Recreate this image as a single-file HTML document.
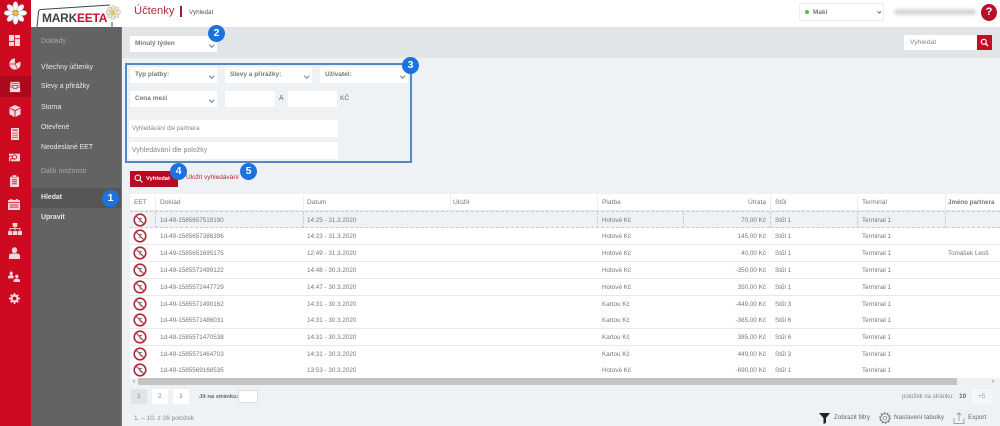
<!DOCTYPE html>
<html lang="cs"><head><meta charset="utf-8"><title>Účtenky</title>
<style>
*{box-sizing:border-box}
html,body{margin:0;padding:0;background:#eff2f5}
body{width:1000px;height:426px;overflow:hidden;position:relative}
#w{position:absolute;left:0;top:0;width:1000px;height:426px;overflow:hidden;background:#eff2f5;font-family:"Liberation Sans",sans-serif;color:#555;filter:blur(.3px)}
.a{position:absolute}
.t{position:absolute;white-space:nowrap;line-height:12px}
.box{position:absolute;background:#fff}
.sel{position:absolute;background:#fff;font-size:6.5px;font-weight:bold;color:#777;line-height:16px;padding-left:5px}
.sel:after{content:"";position:absolute;right:3.500px;top:7px;width:2.500px;height:2.500px;border-right:1px solid #777;border-bottom:1px solid #777;transform:rotate(45deg)}
.m{color:#e8e8e8;font-size:6.900px;left:41px}
.b{position:absolute;width:17px;height:17px;border-radius:50%;background:#1a73e0;color:#fff;font-size:10.5px;font-weight:bold;text-align:center;line-height:17px}
.row{position:absolute;left:130px;width:870px;height:17px;background:#fff;border-bottom:1px solid #e6e8ea;font-size:6.3px;color:#777}
.row span{position:absolute;top:3px;line-height:11px;white-space:nowrap}
.row .d{left:30px}.row .e{left:177px}.row .p{left:472px}.row .u{right:234px}.row .s{left:645px}.row .tm{left:732px}.row .j{left:818px}
.row svg{position:absolute;left:3px;top:1px}
.h{position:absolute;top:3px;font-size:6.600px;color:#777;line-height:11px;white-space:nowrap}
.v{position:absolute;top:0;height:17px;width:1px;background:#eee}
.dv{position:absolute;top:0;height:16px;width:0;border-left:1px dashed #c9cdd1}
.ic{position:absolute}
</style></head><body><div id="w">
<svg width="0" height="0" style="position:absolute"><defs><symbol id="ee" viewBox="0 0 14 14"><circle cx="7" cy="7" r="5.8" fill="#fff" stroke="#b02a38" stroke-width="1.600"/><path d="M3 3L11 11" stroke="#b02a38" stroke-width="1.100"/><path d="M5 5.500H9M7 5.500V9.500" stroke="#777" stroke-width=".9" fill="none"/></symbol></defs></svg>

<div class="a" style="left:0;top:0;width:1000px;height:27px;background:#fff"></div>
<div class="a" style="left:0;top:0;width:31px;height:426px;background:#cc0a20"></div>
<div class="a" style="left:0;top:76px;width:31px;height:21px;background:#ab0a1d"></div>
<div class="a" style="left:31px;top:27px;width:90px;height:399px;background:#636363"></div>
<div class="a" style="left:31px;top:188px;width:90px;height:20px;background:#565656"></div>
<div class="a" style="left:121px;top:27px;width:1px;height:399px;background:#777"></div>
<div class="a" style="left:122px;top:27px;width:878px;height:31px;background:#e2e5e8"></div>

<svg class="a" style="left:4px;top:1px" width="23" height="24" viewBox="0 0 23 24"><g fill="#fff" stroke="#999" stroke-width=".4"><ellipse cx="11.500" cy="5" rx="2.600" ry="4.500"/><ellipse cx="11.500" cy="19" rx="2.600" ry="4.500"/><ellipse cx="4.500" cy="12" rx="4.500" ry="2.600"/><ellipse cx="18.500" cy="12" rx="4.500" ry="2.600"/><ellipse cx="6.500" cy="7" rx="2.600" ry="4.300" transform="rotate(-45 6.500 7)"/><ellipse cx="16.500" cy="7" rx="2.600" ry="4.300" transform="rotate(45 16.500 7)"/><ellipse cx="6.500" cy="17" rx="2.600" ry="4.300" transform="rotate(45 6.500 17)"/><ellipse cx="16.500" cy="17" rx="2.600" ry="4.300" transform="rotate(-45 16.500 17)"/></g><circle cx="11.500" cy="12" r="2.600" fill="#e5c23c"/></svg>

<svg class="a" style="left:35px;top:3px" width="87" height="25" viewBox="0 0 87 25"><path d="M2 24L3.500 9Q4 6.500 6 6.500L75 2" fill="none" stroke="#444" stroke-width="1"/><path d="M77 19V24" stroke="#444" stroke-width="1"/><g fill="#eee9d2" stroke="#999" stroke-width=".35"><circle cx="78" cy="4.500" r="2"/><circle cx="82" cy="6" r="2"/><circle cx="83.500" cy="9.500" r="2"/><circle cx="82" cy="13" r="2"/><circle cx="78" cy="14.500" r="2"/><circle cx="74.500" cy="13" r="2"/><circle cx="73" cy="9.500" r="2"/><circle cx="74.500" cy="6" r="2"/></g><circle cx="78" cy="9.500" r="2.600" fill="#dcc95a"/></svg>
<div class="t" style="left:42px;top:11px;font-size:12px;line-height:14px;font-weight:bold;color:#444;letter-spacing:-.25px">MARK<span style="color:#c8102e">EETA</span></div>

<div class="t" style="left:134px;top:3px;font-size:11.200px;line-height:16px;color:#b5293a">Účtenky</div>
<div class="a" style="left:180px;top:6px;width:2px;height:11px;background:#a51c30"></div>
<div class="t" style="left:189px;top:7px;font-size:6.300px;color:#555">Vyhledat</div>

<div class="a" style="left:799px;top:3px;width:85px;height:18px;background:#fff;border:1px solid #eee"></div>
<div class="a" style="left:805px;top:10px;width:4px;height:4px;border-radius:50%;background:#5cb85c"></div>
<div class="t" style="left:813px;top:7px;font-size:6.500px;font-weight:bold;color:#777">Maki</div>
<div class="a" style="left:878px;top:10px;width:2.500px;height:2.500px;border-right:1px solid #777;border-bottom:1px solid #777;transform:rotate(45deg)"></div>
<div class="a" style="left:894px;top:9px;width:82px;height:6px;background:#d4d6d9;border-radius:4px;filter:blur(1.500px)"></div>
<div class="a" style="left:981px;top:4px;width:16px;height:17px;border-radius:50%;background:#b8102a;color:#fff;font-size:11px;font-weight:bold;text-align:center;line-height:17px">?</div>

<div class="box" style="left:904px;top:35px;width:73px;height:15px"></div>
<div class="t" style="left:910px;top:37px;font-size:6.800px;color:#888">Vyhledat</div>
<div class="a" style="left:977px;top:35px;width:15px;height:15px;background:#c40d25"></div>
<svg class="a" style="left:980px;top:38px" width="9" height="9" viewBox="0 0 9 9"><circle cx="3.800" cy="3.800" r="2.500" fill="none" stroke="#fff" stroke-width="1.200"/><path d="M5.500 5.500L8 8" stroke="#fff" stroke-width="1.400"/></svg>

<!-- sidebar icons -->
<svg class="ic" style="left:9px;top:35px" width="11" height="11" viewBox="0 0 13 12" preserveAspectRatio="none" fill="#f3d9dc"><rect width="6" height="6.500"/><rect x="7" width="6" height="3.500"/><rect y="7.500" width="6" height="4.500"/><rect x="7" y="4.500" width="6" height="7.500"/></svg>
<svg class="ic" style="left:9px;top:58px" width="12" height="12" viewBox="0 0 14 14"><circle cx="7" cy="7" r="6.500" fill="#f3d9dc"/><path d="M7 7V0A7 7 0 0 1 13.500 4Z" fill="#cc0a20"/><path d="M7 7L10 13M7 7H1" stroke="#cc0a20" stroke-width=".8"/></svg>
<svg class="ic" style="left:9px;top:81px" width="12" height="12" viewBox="0 0 14 14"><path d="M2 1H12L13 7V13H1V7Z" fill="#f3d9dc"/><path d="M3 3H11M2.500 5H11.500" stroke="#ab0a1d" stroke-width=".8"/><path d="M1 7H4.500L5.500 9H8.500L9.500 7H13" fill="none" stroke="#ab0a1d" stroke-width=".8"/></svg>
<svg class="ic" style="left:9px;top:105px" width="12" height="12" viewBox="0 0 13 14" fill="#f3d9dc"><path d="M6.500 0L13 3L6.500 6L0 3Z"/><path d="M0 4L6 7V14L0 11Z"/><path d="M13 4L7 7V14L13 11Z"/></svg>
<svg class="ic" style="left:11px;top:128px" width="8" height="12" viewBox="0 0 11 14" preserveAspectRatio="none"><rect width="11" height="14" rx="1" fill="#f3d9dc"/><path d="M2 2.500H9M2 6H3.500M4.800 6H6.300M7.500 6H9M2 8.500H3.500M4.800 8.500H6.300M7.500 8.500H9M2 11H3.500M4.800 11H6.300M7.500 11H9" stroke="#cc0a20" stroke-width="1.200"/></svg>
<svg class="ic" style="left:8px;top:152px" width="13" height="11" viewBox="0 0 15 13"><rect x="1" y="2" width="13" height="9" fill="#f3d9dc"/><circle cx="7.500" cy="6" r="2.500" fill="none" stroke="#cc0a20"/><path d="M1 5H5M3 11V8H8" fill="none" stroke="#cc0a20"/></svg>
<svg class="ic" style="left:10px;top:175px" width="9" height="12" viewBox="0 0 11 15" preserveAspectRatio="none"><rect y="2" width="11" height="13" rx="1" fill="#f3d9dc"/><rect x="3" width="5" height="3" fill="#f3d9dc" stroke="#cc0a20" stroke-width=".5"/><path d="M2.500 6H8.500M2.500 8.500H8.500M2.500 11H8.500" stroke="#cc0a20"/></svg>
<svg class="ic" style="left:8px;top:199px" width="12" height="11" viewBox="0 0 15 13" preserveAspectRatio="none"><rect y="1" width="15" height="12" rx="1" fill="#f3d9dc"/><path d="M0 4H15M2 7H13M2 9.500H13" stroke="#cc0a20"/><path d="M4 0V2M11 0V2" stroke="#f3d9dc" stroke-width="2"/></svg>
<svg class="ic" style="left:8px;top:223px" width="14" height="12" viewBox="0 0 15 14" preserveAspectRatio="none" fill="#f3d9dc"><rect x="5" width="5" height="4.500"/><rect x="0" y="9.500" width="4.500" height="4.500"/><rect x="5.300" y="9.500" width="4.500" height="4.500"/><rect x="10.500" y="9.500" width="4.500" height="4.500"/><path d="M2.200 9V6.500H12.800V9M7.500 4.500V9" fill="none" stroke="#f3d9dc"/></svg>
<svg class="ic" style="left:9px;top:247px" width="11" height="12" viewBox="0 0 13 13" preserveAspectRatio="none" fill="#f3d9dc"><circle cx="6.500" cy="3.500" r="3.200"/><path d="M0 13V9.500Q0 7.500 3 7H10Q13 7.500 13 9.500V13Z"/></svg>
<svg class="ic" style="left:8px;top:271px" width="12" height="11" viewBox="0 0 15 12" preserveAspectRatio="none" fill="#f3d9dc"><circle cx="4" cy="2.500" r="2"/><path d="M0 8V6Q1 4.500 4 4.500Q7 4.500 7 6V8Z"/><circle cx="11" cy="6" r="2"/><path d="M7 12V10Q8 8.500 11 8.500Q14.500 8.500 15 10V12Z"/></svg>
<svg class="ic" style="left:9px;top:293px" width="11" height="11" viewBox="0 0 13 13"><circle cx="6.500" cy="6.500" r="3.500" fill="none" stroke="#f3d9dc" stroke-width="2.600"/><path d="M6.500 0V2.500M6.500 10.500V13M0 6.500H2.500M10.500 6.500H13M2 2L3.500 3.500M9.500 9.500L11 11M11 2L9.500 3.500M3.500 9.500L2 11" stroke="#f3d9dc" stroke-width="2"/></svg>

<!-- menu -->
<div class="t m" style="top:36px;color:#a8a8a8">Doklady</div>
<div class="t m" style="top:62px">Všechny účtenky</div>
<div class="t m" style="top:81px">Slevy a přirážky</div>
<div class="t m" style="top:102px">Storna</div>
<div class="t m" style="top:122px">Otevřené</div>
<div class="t m" style="top:142px">Neodeslané EET</div>
<div class="t m" style="top:166px;color:#a8a8a8">Další možnosti</div>
<div class="t m" style="top:192px;font-weight:bold;font-size:6.900px">Hledat</div>
<div class="t m" style="top:212px;font-weight:bold;font-size:6.900px">Upravit</div>

<!-- filters -->
<div class="sel" style="left:130px;top:36px;width:87px;height:16px">Minulý týden</div>
<div class="a" style="left:125px;top:63px;width:287px;height:100px;border:2px solid #5288c6"></div>
<div class="sel" style="left:130px;top:67px;width:87px;height:16px">Typ platby:</div>
<div class="sel" style="left:225px;top:67px;width:87px;height:16px">Slevy a přirážky:</div>
<div class="sel" style="left:320px;top:67px;width:88px;height:16px">Uživatel:</div>
<div class="sel" style="left:130px;top:91px;width:87px;height:16px">Cena mezi</div>
<div class="box" style="left:225px;top:91px;width:50px;height:16px"></div>
<div class="t" style="left:279px;top:93px;font-size:7px;color:#666">A</div>
<div class="box" style="left:288px;top:91px;width:49px;height:16px"></div>
<div class="t" style="left:340px;top:93px;font-size:6.500px;color:#666">KČ</div>
<div class="box" style="left:129px;top:120px;width:209px;height:17px"></div>
<div class="t" style="left:132px;top:123px;font-size:6.100px;color:#888">Vyhledávání dle partnera</div>
<div class="box" style="left:129px;top:142px;width:209px;height:17px"></div>
<div class="t" style="left:132px;top:145px;font-size:7px;color:#888">Vyhledávání dle položky</div>

<div class="a" style="left:130px;top:171px;width:48px;height:16px;background:#b90a22"></div>
<svg class="a" style="left:134px;top:174px" width="9" height="9" viewBox="0 0 9 9"><circle cx="3.800" cy="3.800" r="2.800" fill="none" stroke="#fff"/><path d="M5.800 5.800L8.500 8.500" stroke="#fff"/></svg>
<div class="t" style="left:146px;top:173px;font-size:5.800px;font-weight:bold;color:#fff">Vyhledat</div>
<div class="t" style="left:186px;top:172px;font-size:6.500px;color:#b0283a">Uložit vyhledávání</div>

<!-- table -->
<div class="a" style="left:130px;top:194px;width:870px;height:17px;background:#fff;border-bottom:1px solid #e6e8ea">
<div class="h" style="left:4px">EET</div><div class="h" style="left:30px">Doklad</div><div class="h" style="left:177px">Datum</div><div class="h" style="left:323px">Uložil</div><div class="h" style="left:472px">Platba</div><div class="h" style="right:234px">Útrata</div><div class="h" style="left:645px">Stůl</div><div class="h" style="left:732px">Terminál</div><div class="h" style="left:818px;font-weight:bold;font-size:6.200px">Jméno partnera</div>
<i class="v" style="left:25px"></i><i class="v" style="left:173px"></i><i class="v" style="left:320px"></i><i class="v" style="left:467px"></i><i class="v" style="left:640px"></i><i class="v" style="left:727px"></i><i class="v" style="left:815px"></i>
</div>
<div class="row" style="top:211px;background:#eff2f5;border:1px dashed #c9cdd1;border-width:1px 0"><svg width="14" height="14"><use href="#ee"/></svg><span class="d">1d-49-1585657518190</span><span class="e">14:25 - 31.3.2020</span><span class="p">Hotové Kč</span><span class="u">70,00 Kč</span><span class="s">Stůl 1</span><span class="tm">Terminal 1</span><i class="dv" style="left:25px"></i><i class="dv" style="left:173px"></i><i class="dv" style="left:467px"></i><i class="dv" style="left:553px"></i><i class="dv" style="left:640px"></i><i class="dv" style="left:727px"></i><i class="dv" style="left:815px"></i></div>
<div class="row" style="top:228px"><svg width="14" height="14"><use href="#ee"/></svg><span class="d">1d-49-1585657386396</span><span class="e">14:23 - 31.3.2020</span><span class="p">Hotové Kč</span><span class="u">145,00 Kč</span><span class="s">Stůl 1</span><span class="tm">Terminal 1</span></div>
<div class="row" style="top:245px"><svg width="14" height="14"><use href="#ee"/></svg><span class="d">1d-49-1585651695175</span><span class="e">12:49 - 31.3.2020</span><span class="p">Hotové Kč</span><span class="u">40,00 Kč</span><span class="s">Stůl 1</span><span class="tm">Terminal 1</span><span class="j">Tomášek Leoš</span></div>
<div class="row" style="top:262px"><svg width="14" height="14"><use href="#ee"/></svg><span class="d">1d-49-1585572499122</span><span class="e">14:48 - 30.3.2020</span><span class="p">Hotové Kč</span><span class="u">-350,00 Kč</span><span class="s">Stůl 1</span><span class="tm">Terminal 1</span></div>
<div class="row" style="top:279px"><svg width="14" height="14"><use href="#ee"/></svg><span class="d">1d-49-1585572447729</span><span class="e">14:47 - 30.3.2020</span><span class="p">Hotové Kč</span><span class="u">350,00 Kč</span><span class="s">Stůl 1</span><span class="tm">Terminal 1</span></div>
<div class="row" style="top:296px"><svg width="14" height="14"><use href="#ee"/></svg><span class="d">1d-49-1585571490162</span><span class="e">14:31 - 30.3.2020</span><span class="p">Kartou Kč</span><span class="u">-449,00 Kč</span><span class="s">Stůl 3</span><span class="tm">Terminal 1</span></div>
<div class="row" style="top:312px"><svg width="14" height="14"><use href="#ee"/></svg><span class="d">1d-49-1585571486031</span><span class="e">14:31 - 30.3.2020</span><span class="p">Kartou Kč</span><span class="u">-385,00 Kč</span><span class="s">Stůl 6</span><span class="tm">Terminal 1</span></div>
<div class="row" style="top:329px"><svg width="14" height="14"><use href="#ee"/></svg><span class="d">1d-49-1585571470538</span><span class="e">14:31 - 30.3.2020</span><span class="p">Kartou Kč</span><span class="u">385,00 Kč</span><span class="s">Stůl 6</span><span class="tm">Terminal 1</span></div>
<div class="row" style="top:346px"><svg width="14" height="14"><use href="#ee"/></svg><span class="d">1d-49-1585571464703</span><span class="e">14:31 - 30.3.2020</span><span class="p">Kartou Kč</span><span class="u">449,00 Kč</span><span class="s">Stůl 3</span><span class="tm">Terminal 1</span></div>
<div class="row" style="top:362px;height:16px;border-bottom:0"><svg width="14" height="14"><use href="#ee"/></svg><span class="d">1d-49-1585569168535</span><span class="e">13:53 - 30.3.2020</span><span class="p">Hotové Kč</span><span class="u">-690,00 Kč</span><span class="s">Stůl 1</span><span class="tm">Terminal 1</span></div>

<!-- scrollbar -->
<div class="a" style="left:130px;top:378px;width:870px;height:7px;background:#f1f1f1"></div>
<div class="a" style="left:138px;top:378px;width:819px;height:7px;background:#c4c4c4"></div>
<div class="t" style="left:133px;top:376px;font-size:6px;color:#444">‹</div>
<div class="t" style="left:992px;top:376px;font-size:6px;color:#444">›</div>

<!-- pagination -->
<div class="box" style="left:131px;top:389px;width:16px;height:15px;background:#e1e4e7"></div>
<div class="box" style="left:152px;top:389px;width:16px;height:15px"></div>
<div class="box" style="left:173px;top:389px;width:16px;height:15px"></div>
<div class="t" style="left:137px;top:391px;font-size:6.500px;color:#888">1</div>
<div class="t" style="left:158px;top:391px;font-size:6.500px;color:#888">2</div>
<div class="t" style="left:179px;top:391px;font-size:6.500px;color:#888">3</div>
<div class="t" style="left:199px;top:391px;font-size:5.800px;font-weight:bold;color:#666">Jít na stránku:</div>
<div class="box" style="left:238px;top:390px;width:20px;height:13px;border:1px solid #ddd;border-radius:2px"></div>
<div class="t" style="left:134px;top:413px;font-size:6.500px;color:#888">1. – 10. z 26 položek</div>
<div class="t" style="left:902px;top:391px;font-size:6px;color:#888">položek na stránku:</div>
<div class="t" style="left:959px;top:391px;font-size:6.500px;font-weight:bold;color:#666">10</div>
<div class="box" style="left:972px;top:389px;width:20px;height:15px;background:#f4f6f8"></div>
<div class="t" style="left:978px;top:391px;font-size:6.500px;color:#999">+5</div>

<svg class="a" style="left:819px;top:412px" width="11" height="12" viewBox="0 0 11 12"><path d="M0 1H11L7 6V11L4.500 12V6Z" fill="#222"/></svg>
<div class="t" style="left:834px;top:412px;font-size:6.300px;color:#666">Zobrazit filtry</div>
<svg class="a" style="left:879px;top:412px" width="12" height="12" viewBox="0 0 12 12"><circle cx="6" cy="6" r="4.300" fill="none" stroke="#777" stroke-width=".8"/><circle cx="6" cy="6" r="1.800" fill="none" stroke="#777" stroke-width=".7"/><circle cx="6" cy="6" r="5.200" fill="none" stroke="#777" stroke-width="1.200" stroke-dasharray="1.500 1.800"/></svg>
<div class="t" style="left:894px;top:412px;font-size:6.300px;color:#666">Nastavení tabulky</div>
<svg class="a" style="left:953px;top:412px" width="12" height="12" viewBox="0 0 12 12"><path d="M1 6V11.500H11V6M6 9V1M3.800 3L6 .8L8.200 3" fill="none" stroke="#888" stroke-width=".7"/></svg>
<div class="t" style="left:968px;top:412px;font-size:6.300px;color:#666">Export</div>

<!-- badges -->
<div class="b" style="left:102px;top:190px">1</div>
<div class="b" style="left:208px;top:25px">2</div>
<div class="b" style="left:402px;top:57px">3</div>
<div class="b" style="left:170px;top:163px">4</div>
<div class="b" style="left:240px;top:163px">5</div>
</div></body></html>
